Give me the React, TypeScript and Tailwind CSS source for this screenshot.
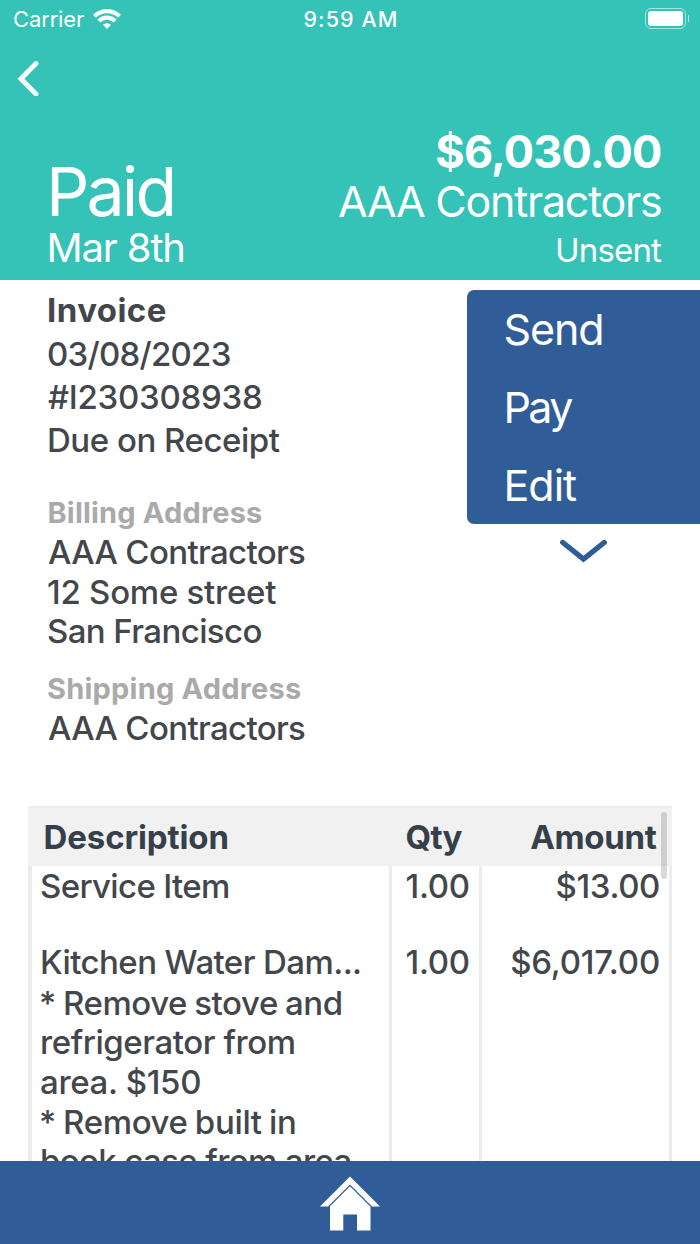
import type { ReactNode } from "react";

function StatusBar() {
  return (
    <div className="grid h-10 grid-cols-3 items-center pl-[13px] pr-[11px]">
      <div className="flex items-center gap-[9px]">
        <span className="-mt-[2px] text-[22px] leading-[38px] tracking-[-0.14px]">Carrier</span>
        <svg className="-mt-[3px] h-5 w-7" viewBox="0 0 28 20" fill="none" stroke="white" strokeWidth="4.2">
          <path d="M1.4 7.3a18 18 0 0 1 25.2 0" />
          <path d="M5.9 12a11.6 11.6 0 0 1 16.2 0" />
          <path d="M14 20l-4.1-4.2a5.9 5.9 0 0 1 8.2 0z" fill="white" stroke="none" />
        </svg>
      </div>
      <span className="-mt-[2px] text-center text-[21.5px] font-medium leading-[38px] tracking-[1.1px]">9:59 AM</span>
      <div className="-mt-[3px] flex items-center justify-end gap-[2px]">
        <div className="h-[21px] w-[41px] rounded-[6px] border-[1.5px] border-white/55 p-[2px]">
          <div className="h-full w-full rounded-[3px] bg-white" />
        </div>
        <div className="-mr-[0.5px] h-[7px] w-[1.5px] rounded-r bg-white/60" />
      </div>
    </div>
  );
}

function Header() {
  return (
    <header className="flex h-[280px] flex-col bg-[#35c2b7] text-white">
      <StatusBar />
      <button className="ml-[17px] mt-5 h-9 w-6 shrink-0" aria-label="Back">
        <svg className="h-9 w-6" viewBox="0 0 24 36" fill="none" stroke="white" strokeWidth="4.8" strokeLinecap="round">
          <path d="M19 3.5L3.9 18.7L19 34" />
        </svg>
      </button>
      <div className="mt-[34px] flex justify-between pl-[46px] pr-[38.5px]">
        <div className="pt-[31px]">
          <div className="text-[68px] leading-[60px] tracking-[-2.9px]">Paid</div>
          <div className="ml-[0.5px] mt-[7px] text-[40px] leading-10 tracking-[-1.15px]">Mar 8th</div>
        </div>
        <div className="text-right">
          <div className="text-[45px] font-bold leading-[44px] tracking-[-0.85px]">$6,030.00</div>
          <div className="mt-[3px] text-[43px] leading-[48px] tracking-[-1.25px]">AAA Contractors</div>
          <div className="mr-[0.5px] mt-[5px] text-[33px] leading-10 tracking-[-0.85px]">Unsent</div>
        </div>
      </div>
    </header>
  );
}

function ActionMenu() {
  return (
    <aside className="flex w-[233.5px] flex-col pt-[9.5px]">
      <nav className="flex flex-col rounded-l-[7px] bg-[#305d98] text-[43px] leading-[78px] text-white">
        <a className="pl-[37px] tracking-[-1.1px]">Send</a>
        <a className="pl-[37px] tracking-[-2.6px]">Pay</a>
        <a className="pl-[37px] tracking-[-1px]">Edit</a>
      </nav>
      <svg className="ml-[92px] mt-[14px] h-7 w-[50px]" viewBox="0 0 50 28" fill="none" stroke="#305d98" strokeWidth="5.4" strokeLinecap="round">
        <path d="M3.8 4.5L24.5 21L45.2 4.5" />
      </svg>
    </aside>
  );
}

function Details() {
  return (
    <section className="flex h-[526px] justify-between">
      <div className="pl-[47px] pt-2 text-[33px] font-medium">
        <h1 className="text-[33px] font-bold leading-[44px] tracking-[0.45px]">Invoice</h1>
        <p className="mt-px leading-[43px] tracking-[-0.75px]">03/08/2023</p>
        <p className="ml-px leading-[43px] tracking-[-0.26px]">#I230308938</p>
        <p className="leading-[43px] tracking-[-0.48px]">Due on Receipt</p>
        <h2 className="ml-[0.5px] mt-[33px] text-[29px] font-bold leading-9 tracking-[0.18px] text-[#aaaaaa]">Billing Address</h2>
        <p className="ml-px mt-[1px] leading-10 tracking-[-0.65px]">AAA Contractors</p>
        <p className="leading-10 tracking-[-0.25px]">12 Some street</p>
        <p className="leading-[39.5px] tracking-[-0.6px]">San Francisco</p>
        <h2 className="mt-[19.5px] text-[29px] font-bold leading-9 tracking-[0.22px] text-[#aaaaaa]">Shipping Address</h2>
        <p className="ml-px mt-[1px] leading-10 tracking-[-0.65px]">AAA Contractors</p>
      </div>
      <ActionMenu />
    </section>
  );
}

function Column({ className, children }: { className: string; children: ReactNode }) {
  return <div className={`border-r-[3.5px] border-[#ececec] ${className}`}>{children}</div>;
}

function ItemsTable() {
  return (
    <section className="relative ml-7 flex h-[440px] w-[644px] flex-col text-[33px]">
      <div className="flex h-[60px] shrink-0 items-center border-t-2 border-[#ececec] bg-[#f1f1f1] pt-px font-bold text-[#36404a]">
        <span className="w-[362px] pl-[15.5px] tracking-[-0.11px]">Description</span>
        <span className="w-[92px] pl-[15.5px] tracking-[-0.7px]">Qty</span>
        <span className="flex-1 pr-[15.5px] text-right tracking-[-0.3px]">Amount</span>
      </div>
      <div className="flex flex-1 border-l-4 border-[#ececec] font-medium leading-10">
        <Column className="w-[360px] whitespace-nowrap pl-2">
          <p className="tracking-[-0.65px]">Service Item</p>
          <p className="mt-[35.5px] tracking-[-0.58px]">Kitchen Water Dam...</p>
          <div className="mt-[2px] leading-[39.75px]">
            <p className="-ml-px tracking-[-0.42px] [word-spacing:-1.2px]">* Remove stove and</p>
            <p className="tracking-[-0.44px]">refrigerator from</p>
            <p className="tracking-[-0.34px]">area. $150</p>
            <p className="-ml-px tracking-[-0.35px] [word-spacing:-1.2px]">* Remove built in</p>
            <p className="-mt-px tracking-[-0.63px]">book case from area</p>
          </div>
        </Column>
        <Column className="w-[89.5px] pl-[13.5px] tracking-[-0.3px]">
          <p>1.00</p>
          <p className="mt-[35.5px]">1.00</p>
        </Column>
        <Column className="flex-1 pr-[9px] text-right">
          <p className="tracking-[-0.38px]">$13.00</p>
          <p className="mt-[35.5px] tracking-[-0.2px]">$6,017.00</p>
        </Column>
      </div>
      <div className="absolute right-[5.5px] top-[6px] h-[67px] w-[5.5px] rounded-full bg-black/15" />
    </section>
  );
}

function Footer() {
  return (
    <footer className="flex h-[83px] justify-center bg-[#305d98] pt-[15px]">
      <svg className="h-[55px] w-[60px]" viewBox="0 0 60 55" fill="white">
        <path d="M30 0.5L60 30.5H52L30 8.5L8 30.5H0Z" />
        <path d="M30 10.2L50.5 30.7V54.5H37V38.5H23.3V54.5H10V30.2Z" />
      </svg>
    </footer>
  );
}

export default function App() {
  return (
    <div className="flex h-[1244px] w-[700px] flex-col overflow-hidden bg-white font-['Inter',sans-serif] text-[#43474c]">
      <Header />
      <main className="h-[881px] overflow-hidden">
        <Details />
        <ItemsTable />
      </main>
      <Footer />
    </div>
  );
}
